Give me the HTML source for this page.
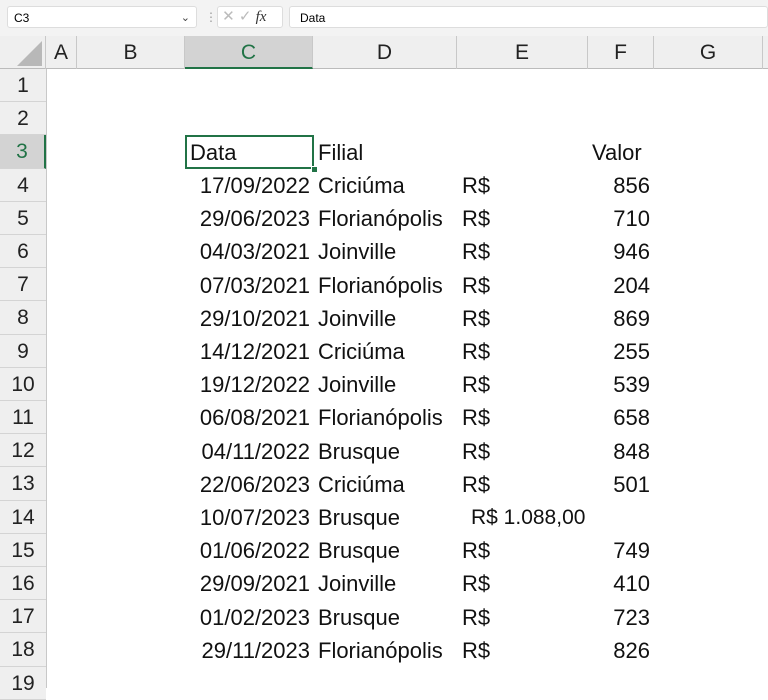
<!DOCTYPE html>
<html><head><meta charset="utf-8"><style>
body{margin:0;width:768px;height:688px;overflow:hidden;background:#fff;font-family:"Liberation Sans",sans-serif;position:relative}
.a{position:absolute}
.t{position:absolute;font-size:22px;color:#111;line-height:33px;white-space:nowrap}
.rh{position:absolute;left:0;width:46px;text-align:center;font-size:21px;color:#222;line-height:33px;background:#efefef;border-bottom:1px solid #d4d4d4;box-sizing:border-box}
.ch{position:absolute;top:36px;height:33px;line-height:33px;text-align:center;font-size:21px;color:#222;border-right:1px solid #c8c8c8;box-sizing:border-box}
</style></head><body>
<div class="a" style="left:0;top:0;width:768px;height:36px;background:#f3f3f3"></div>
<div class="a" style="left:7px;top:6px;width:190px;height:22px;background:#fff;border:1px solid #ddd;border-radius:3px;font-size:12px;line-height:22px;padding-left:6px;box-sizing:border-box">C3<span style="position:absolute;right:6px;top:0;color:#444;font-size:11px">&#8964;</span></div>
<div class="a" style="left:205px;top:10px;color:#999;font-size:12px">⋮</div>
<div class="a" style="left:217px;top:6px;width:66px;height:22px;background:#fff;border:1px solid #ddd;border-radius:3px;box-sizing:border-box;font-size:15px;line-height:20px;color:#bbb">&nbsp;✕ ✓ <i style="color:#333;font-family:'Liberation Serif',serif">fx</i></div>
<div class="a" style="left:289px;top:6px;width:479px;height:22px;background:#fff;border:1px solid #ddd;border-radius:3px;box-sizing:border-box;font-size:12px;line-height:22px;padding-left:10px">Data</div>
<div class="a" style="left:0;top:36px;width:768px;height:33px;background:#efefef;border-bottom:1px solid #bbb;box-sizing:border-box"></div>
<div class="a" style="left:0;top:36px;width:46px;height:33px;border-right:1px solid #c8c8c8;box-sizing:border-box"><svg width="46" height="33"><polygon points="42,5 42,30 17,30" fill="#b8b8b8"/></svg></div>
<div class="ch" style="left:46px;width:31px">A</div>
<div class="ch" style="left:77px;width:108px">B</div>
<div class="ch" style="left:185px;width:128px;background:#d3d3d3;color:#217346;border-bottom:2px solid #217346">C</div>
<div class="ch" style="left:313px;width:144px">D</div>
<div class="ch" style="left:457px;width:131px">E</div>
<div class="ch" style="left:588px;width:66px">F</div>
<div class="ch" style="left:654px;width:109px">G</div>
<div class="a" style="left:46px;top:69px;width:1px;height:619px;background:#c8c8c8"></div>
<div id="rows"></div>
<script>
var d=[["17/09/2022","Criciúma","856"],["29/06/2023","Florianópolis","710"],["04/03/2021","Joinville","946"],["07/03/2021","Florianópolis","204"],["29/10/2021","Joinville","869"],["14/12/2021","Criciúma","255"],["19/12/2022","Joinville","539"],["06/08/2021","Florianópolis","658"],["04/11/2022","Brusque","848"],["22/06/2023","Criciúma","501"],["10/07/2023","Brusque",null],["01/06/2022","Brusque","749"],["29/09/2021","Joinville","410"],["01/02/2023","Brusque","723"],["29/11/2023","Florianópolis","826"]];
var h="";
for(var r=1;r<=19;r++){var y=69+(r-1)*33.2;
h+='<div class="rh" style="top:'+y+'px;height:33.2px'+(r==3?';background:#d3d3d3;color:#217346;border-right:2px solid #217346':'')+'">'+r+'</div>';}
h+='<div class="t" style="left:190px;top:136px">Data</div><div class="t" style="left:318px;top:136px">Filial</div><div class="t" style="left:592px;top:136px">Valor</div>';
h+='<div class="a" style="left:185px;top:135px;width:129px;height:34px;border:2px solid #217346;box-sizing:border-box"></div><div class="a" style="left:311px;top:166px;width:5px;height:5px;background:#217346;border:1px solid #fff"></div>';
for(var i=0;i<d.length;i++){var y=169+i*33.2;
h+='<div class="t" style="left:185px;width:125px;text-align:right;top:'+y+'px">'+d[i][0]+'</div>';
h+='<div class="t" style="left:318px;top:'+y+'px">'+d[i][1]+'</div>';
if(d[i][2]){h+='<div class="t" style="left:462px;top:'+y+'px">R$</div><div class="t" style="left:588px;width:62px;text-align:right;top:'+y+'px">'+d[i][2]+'</div>';}
else h+='<div class="t" style="left:471px;top:'+y+'px;font-size:21px">R$ 1.088,00</div>';}
document.getElementById("rows").innerHTML=h;
</script>
</body></html>
